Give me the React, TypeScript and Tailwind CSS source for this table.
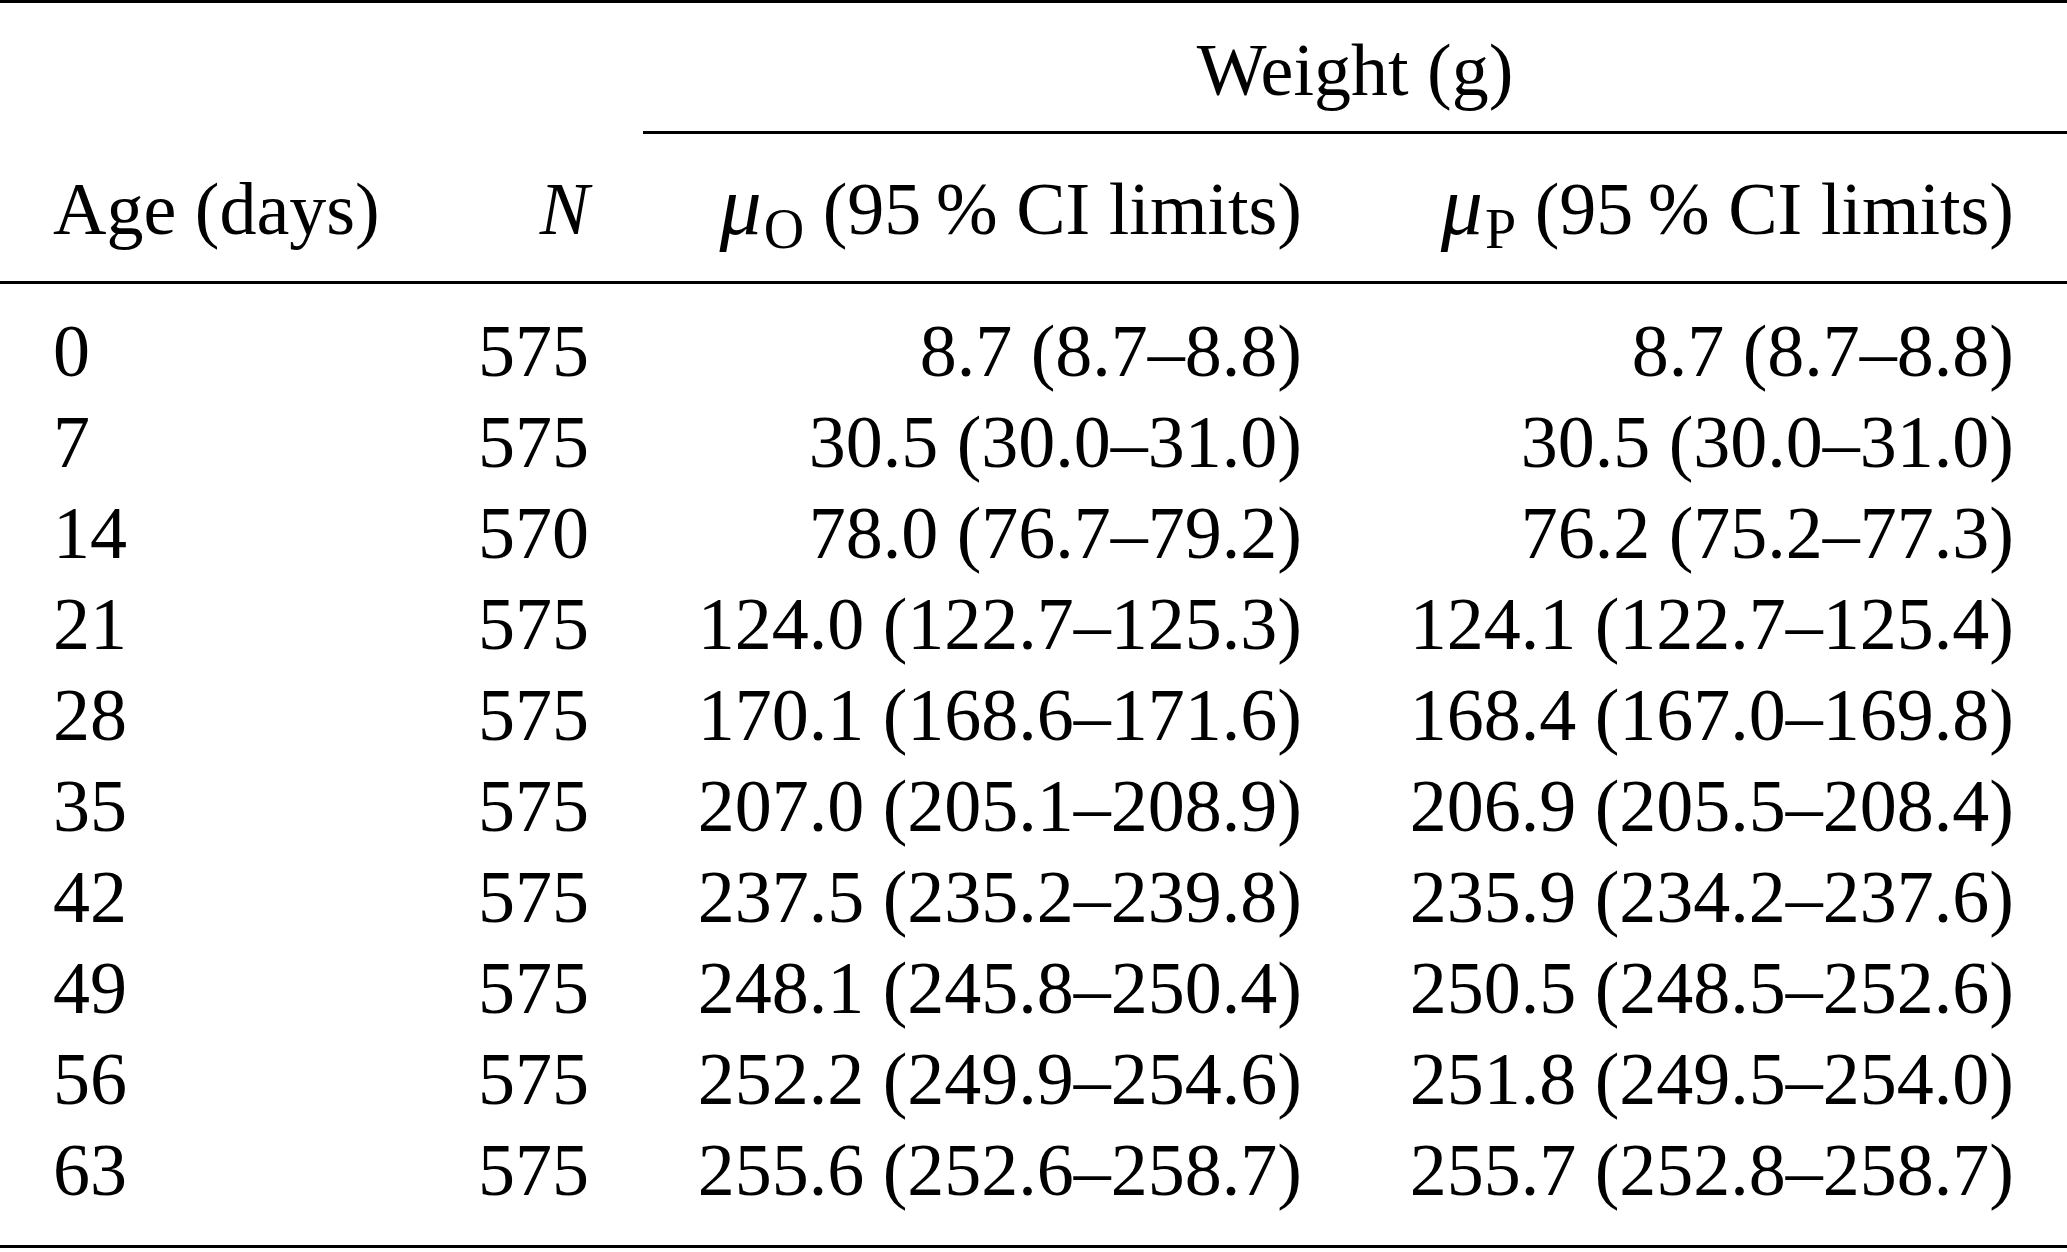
const rows: [string, string, string, string][] = [
  ['0', '575', '8.7 (8.7–8.8)', '8.7 (8.7–8.8)'],
  ['7', '575', '30.5 (30.0–31.0)', '30.5 (30.0–31.0)'],
  ['14', '570', '78.0 (76.7–79.2)', '76.2 (75.2–77.3)'],
  ['21', '575', '124.0 (122.7–125.3)', '124.1 (122.7–125.4)'],
  ['28', '575', '170.1 (168.6–171.6)', '168.4 (167.0–169.8)'],
  ['35', '575', '207.0 (205.1–208.9)', '206.9 (205.5–208.4)'],
  ['42', '575', '237.5 (235.2–239.8)', '235.9 (234.2–237.6)'],
  ['49', '575', '248.1 (245.8–250.4)', '250.5 (248.5–252.6)'],
  ['56', '575', '252.2 (249.9–254.6)', '251.8 (249.5–254.0)'],
  ['63', '575', '255.6 (252.6–258.7)', '255.7 (252.8–258.7)'],
]

function Mu({ sub }: { sub: string }) {
  return (
    <>
      <span className="italic text-[84px] leading-none">μ</span>
      <span className="text-[56px] leading-none align-[-14px] ml-[2px]">{sub}</span>
    </>
  )
}

export default function App() {
  return (
    <div className="w-[2067px] h-[1252px] bg-white text-black font-['Liberation_Serif',serif] text-[74px] leading-[91px]">
      <div className="border-t-[3px] border-black pt-[22px]">
        {/* spanner over the two weight columns */}
        <div className="flex">
          <div className="w-[643px] shrink-0" />
          <div className="flex-1 text-center pb-[15px] border-b-[3px] border-black">Weight (g)</div>
        </div>

        <div className="grid grid-cols-[387px_149px_713px_712px] h-[147px] px-[53px] pt-[30px] whitespace-nowrap">
          <div>Age (days)</div>
          <div className="text-right italic">N</div>
          <div className="text-right">
            <Mu sub="O" /> (95&thinsp;% CI limits)
          </div>
          <div className="text-right">
            <Mu sub="P" /> (95&thinsp;% CI limits)
          </div>
        </div>
      </div>

      <div className="border-t-[3px] border-b-[3px] border-black pt-[22px] pb-[29px]">
        <div className="grid grid-cols-[387px_149px_713px_712px] px-[53px] whitespace-nowrap">
          {rows.map(r => (
            <div key={r[0]} className="contents">
              <div>{r[0]}</div>
              <div className="text-right">{r[1]}</div>
              <div className="text-right">{r[2]}</div>
              <div className="text-right">{r[3]}</div>
            </div>
          ))}
        </div>
      </div>
    </div>
  )
}
